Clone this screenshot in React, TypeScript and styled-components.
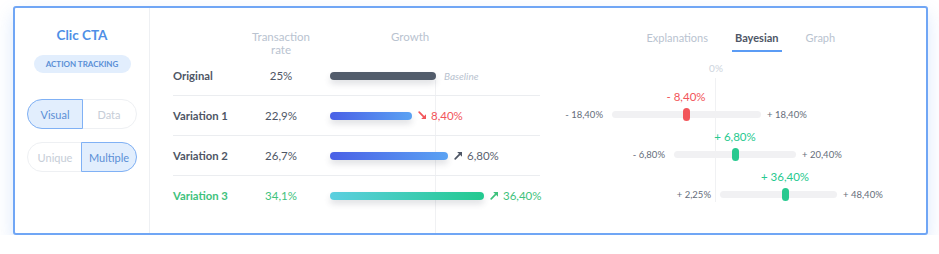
import * as React from 'react';
import styled, { createGlobalStyle } from 'styled-components';

const GlobalStyle = createGlobalStyle`
	body {
		margin: 0;
		background: #ffffff;
		font-family: Lato, "Noto Sans", sans-serif;
	}
`;

const dark = '#4e5665';
const muted = '#b9c3d0';
const blue = '#4f8fe6';
const red = '#f2555a';
const green = '#3ec27c';
const teal = '#27c98f';

const Card = styled.div`
	box-sizing: border-box;
	margin: 6px 0 0 13px;
	width: 915px;
	height: 229px;
	border: 2px solid #70a6f5;
	border-radius: 3px;
	background: #fff;
	box-shadow: 0 8px 18px rgba(90, 150, 240, 0.22);
	display: flex;
`;

const Side = styled.div`
	width: 134px;
	border-right: 1px solid #eef0f3;
	display: flex;
	flex-direction: column;
	align-items: center;
	padding-top: 19px;
`;

const Title = styled.div`
	font-size: 13.5px;
	font-weight: 700;
	color: ${blue};
	line-height: 17px;
`;

const Badge = styled.div`
	margin-top: 11px;
	width: 97px;
	height: 18px;
	border-radius: 9px;
	background: #e2eefd;
	color: #5a8fd6;
	font-size: 8px;
	font-weight: 700;
	display: flex;
	align-items: center;
	justify-content: center;
`;

const Toggle = styled.div<{ $top: number }>`
	margin-top: ${(p) => p.$top}px;
	width: 110px;
	height: 30px;
	box-sizing: border-box;
	border: 1px solid #eef0f3;
	border-radius: 15px;
	display: flex;
`;

const ToggleOption = styled.div<{ $active?: boolean; $side: 'left' | 'right' }>`
	flex: 1;
	margin: -1px;
	display: flex;
	align-items: center;
	justify-content: center;
	font-size: 11px;
	color: ${(p) => (p.$active ? '#5a8fd6' : '#c6cdd7')};
	background: ${(p) => (p.$active ? '#e2eefd' : 'transparent')};
	border: 1px solid ${(p) => (p.$active ? '#80b1f5' : 'transparent')};
	border-radius: ${(p) => (p.$side === 'left' ? '15px 0 0 15px' : '0 15px 15px 0')};
`;

const Main = styled.div`
	flex: 1;
	display: flex;
`;

const Table = styled.div`
	position: relative;
	width: 367px;
	padding: 22px 0 0 23px;
`;

const BaselineAxis = styled.div`
	position: absolute;
	left: 285px;
	top: 72px;
	bottom: 0;
	width: 1px;
	background: #f0f1f3;
`;

const Grid = styled.div<{ $border?: boolean; $height: number }>`
	position: relative;
	display: grid;
	grid-template-columns: 78px 60px 1fr;
	align-items: center;
	height: ${(p) => p.$height}px;
	border-bottom: 1px solid ${(p) => (p.$border ? '#ebedf0' : 'transparent')};
`;

const HeadCell = styled.div`
	font-size: 11.5px;
	line-height: 13px;
	color: ${muted};
	text-align: center;
	align-self: start;
`;

const GrowthHead = styled(HeadCell)`
	text-align: left;
	padding-left: 80px;
`;

const Label = styled.div<{ $color: string }>`
	font-size: 11.3px;
	font-weight: 700;
	color: ${(p) => p.$color};
`;

const Rate = styled.div<{ $color: string }>`
	font-size: 11.5px;
	text-align: center;
	color: ${(p) => p.$color};
`;

const BarCell = styled.div`
	display: flex;
	align-items: center;
	padding-left: 19px;
`;

const Bar = styled.div<{ $fill: string }>`
	height: 8px;
	border-radius: 4px;
	background: ${(p) => p.$fill};
	box-shadow: 0 4px 6px rgba(60, 70, 90, 0.16);
`;

const Baseline = styled.span`
	margin-left: 8px;
	font-size: 10px;
	font-style: italic;
	color: ${muted};
`;

const Delta = styled.span<{ $color: string }>`
	margin-left: 6px;
	display: flex;
	align-items: center;
	gap: 4px;
	font-size: 11.5px;
	color: ${(p) => p.$color};
`;

const Bayes = styled.div`
	position: relative;
	flex: 1;
	padding-top: 23px;
`;

const Tabs = styled.div`
	display: flex;
	gap: 20px;
	margin-left: 103px;
`;

const Tab = styled.div<{ $active?: boolean }>`
	padding: 0 3.5px 5px;
	font-size: 11px;
	line-height: 14px;
	font-weight: ${(p) => (p.$active ? 700 : 400)};
	color: ${(p) => (p.$active ? dark : muted)};
	border-bottom: 2px solid ${(p) => (p.$active ? '#5b9cf5' : 'transparent')};
`;

const Zero = styled.div`
	margin: 10px 0 0 166px;
	width: 20px;
	text-align: center;
	font-size: 10px;
	line-height: 12px;
	color: #cdd4dd;
`;

const ZeroAxis = styled.div`
	position: absolute;
	left: 175px;
	top: 70px;
	height: 124px;
	width: 1px;
	background: #f0f1f3;
`;

const Sliders = styled.div`
	margin-top: 20px;
`;

const SliderRow = styled.div`
	height: 40px;
	display: flex;
	align-items: center;
`;

const MinLabel = styled.div`
	width: 50px;
	margin-right: 9px;
	text-align: right;
	font-size: 9.5px;
	color: #656d7a;
`;

const MaxLabel = styled.div`
	margin-left: 6px;
	font-size: 9.5px;
	color: #656d7a;
`;

const Track = styled.div`
	position: relative;
	height: 7px;
	border-radius: 4px;
	background: #f1f1f3;
`;

const Thumb = styled.div<{ $color: string }>`
	position: absolute;
	top: -3px;
	width: 7px;
	height: 13px;
	margin-left: -3.5px;
	border-radius: 3.5px;
	background: ${(p) => p.$color};
`;

const ThumbValue = styled.div<{ $color: string }>`
	position: absolute;
	top: -21px;
	line-height: 14px;
	transform: translateX(-50%);
	white-space: nowrap;
	font-size: 11.5px;
	color: ${(p) => p.$color};
`;

function Arrow({ up, color }: { up: boolean; color: string }) {
	return (
		<svg width="9" height="9" viewBox="0 0 9 9">
			{up ? (
				<>
					<path d="M1.2 7.8 L5.6 3.4" stroke={color} strokeWidth="1.7" strokeLinecap="round" />
					<polygon points="3.2,1 8,1 8,5.8" fill={color} />
				</>
			) : (
				<>
					<path d="M1.2 1.2 L5.6 5.6" stroke={color} strokeWidth="1.7" strokeLinecap="round" />
					<polygon points="8,3.2 8,8 3.2,8" fill={color} />
				</>
			)}
		</svg>
	);
}

const rows = [
	{ name: 'Original', rate: '25%', width: 106, fill: '#525c6b', color: dark },
	{ name: 'Variation 1', rate: '22,9%', width: 82, fill: 'linear-gradient(90deg, #4a60e6, #5aa2f3)', color: dark, delta: '8,40%', up: false, deltaColor: red, arrowColor: red },
	{ name: 'Variation 2', rate: '26,7%', width: 118, fill: 'linear-gradient(90deg, #4a60e6, #5aa2f3)', color: dark, delta: '6,80%', up: true, deltaColor: '#5b6370', arrowColor: '#4e5665' },
	{ name: 'Variation 3', rate: '34,1%', width: 154, fill: 'linear-gradient(90deg, #5ccfe0, #22c98f)', color: green, delta: '36,40%', up: true, deltaColor: green, arrowColor: green },
];

const sliders = [
	{ min: '- 18,40%', max: '+ 18,40%', value: '- 8,40%', offset: 13, width: 149, thumb: 74, color: red },
	{ min: '- 6,80%', max: '+ 20,40%', value: '+ 6,80%', offset: 75, width: 122, thumb: 61, color: teal },
	{ min: '+ 2,25%', max: '+ 48,40%', value: '+ 36,40%', offset: 121, width: 117, thumb: 65, color: teal },
];

export default function App() {
	return (
		<>
			<GlobalStyle />
			<Card>
				<Side>
					<Title>Clic CTA</Title>
					<Badge>ACTION TRACKING</Badge>
					<Toggle $top={26}>
						<ToggleOption $side="left" $active>Visual</ToggleOption>
						<ToggleOption $side="right">Data</ToggleOption>
					</Toggle>
					<Toggle $top={13}>
						<ToggleOption $side="left">Unique</ToggleOption>
						<ToggleOption $side="right" $active>Multiple</ToggleOption>
					</Toggle>
				</Side>
				<Main>
					<Table>
						<BaselineAxis />
						<Grid $height={25}>
							<div />
							<HeadCell>Transaction<br />rate</HeadCell>
							<GrowthHead>Growth</GrowthHead>
						</Grid>
						{rows.map((r, i) => (
							<Grid key={r.name} $height={39} $border={i < rows.length - 1}>
								<Label $color={r.color}>{r.name}</Label>
								<Rate $color={r.color}>{r.rate}</Rate>
								<BarCell>
									<Bar $fill={r.fill} style={{ width: r.width }} />
									{r.delta ? (
										<Delta $color={r.deltaColor}>
											<Arrow up={!!r.up} color={r.arrowColor} />
											{r.delta}
										</Delta>
									) : (
										<Baseline>Baseline</Baseline>
									)}
								</BarCell>
							</Grid>
						))}
					</Table>
					<Bayes>
						<Tabs>
							<Tab>Explanations</Tab>
							<Tab $active>Bayesian</Tab>
							<Tab>Graph</Tab>
						</Tabs>
						<Zero>0%</Zero>
						<ZeroAxis />
						<Sliders>
							{sliders.map((s) => (
								<SliderRow key={s.value} style={{ marginLeft: s.offset }}>
									<MinLabel>{s.min}</MinLabel>
									<Track style={{ width: s.width }}>
										<Thumb $color={s.color} style={{ left: s.thumb }} />
										<ThumbValue $color={s.color} style={{ left: s.thumb }}>{s.value}</ThumbValue>
									</Track>
									<MaxLabel>{s.max}</MaxLabel>
								</SliderRow>
							))}
						</Sliders>
					</Bayes>
				</Main>
			</Card>
		</>
	);
}
